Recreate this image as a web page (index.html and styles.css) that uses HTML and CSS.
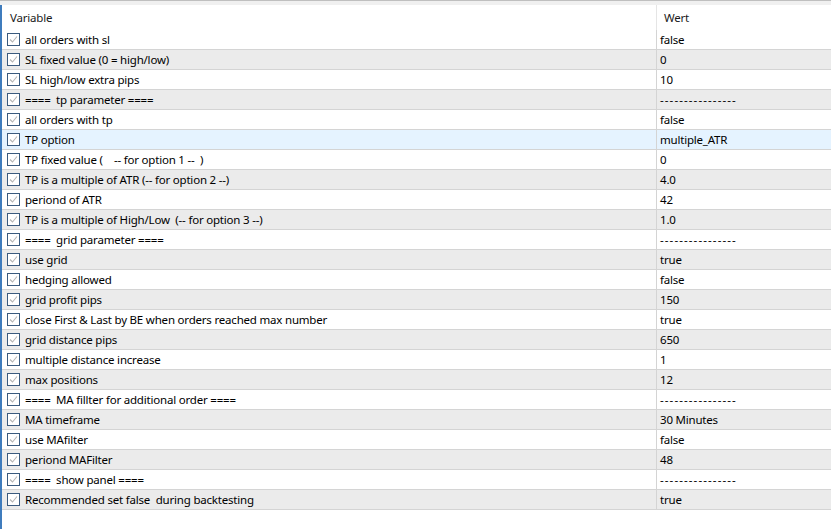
FILE: index.html
```html
<!DOCTYPE html>
<html>
<head>
<meta charset="utf-8">
<link rel="stylesheet" href="styles.css">
</head>
<body>
<div class="topbar"></div>
<div class="list">
  <div class="header">
    <div class="hcell name">Variable</div>
    <div class="hcell value">Wert</div>
  </div>
  <div id="rows"></div>
</div>
<script src="app.js"></script>
</body>
</html>
```
FILE: styles.css
```css
html, body {
  margin: 0;
  padding: 0;
  background: #ffffff;
}
body {
  font-family: "Noto Sans", "Open Sans", sans-serif;
  font-size: 11.5px;
  letter-spacing: -0.2px;
  color: #000000;
  width: 831px;
  height: 529px;
  overflow: hidden;
}
.topbar {
  height: 4px;
  background: #f0f0f0;
  border-top: 1px solid #bfbfbf;
}
.list {
  border-left: 2px solid #3f7cbd;
  height: 524px;
}
.header {
  display: flex;
  height: 25px;
  align-items: center;
}
.hcell {
  height: 25px;
  display: flex;
  align-items: center;
  color: #1a1a1a;
}
.hcell.name {
  width: 646px;
  padding-left: 8px;
  border-right: 1px solid #e5e5e5;
}
.hcell.value {
  padding-left: 7px;
}
.row {
  display: flex;
  height: 19px;
  border-bottom: 1px solid #d4d4d4;
  background: #ffffff;
}
.row.alt {
  background: #ebebeb;
}
.row.sel {
  background: #e5f3ff;
}
.cell {
  display: flex;
  align-items: center;
  white-space: pre;
}
.cell.name {
  width: 655px;
  border-right: 1px solid #d4d4d4;
  gap: 5px;
  padding-left: 5px;
  box-sizing: border-box;
}
.cell.value {
  padding-left: 3px;
}
.cell.value.dash {
  letter-spacing: 1.1px;
}
.check {
  width: 13px;
  height: 13px;
  flex: none;
}
```
FILE: app.js
```js
const data = [
  ["all orders with sl", "false"],
  ["SL fixed value (0 = high/low)", "0"],
  ["SL high/low extra pips", "10"],
  ["====  tp parameter ====", "----------------"],
  ["all orders with tp", "false"],
  ["TP option", "multiple_ATR"],
  ["TP fixed value (    -- for option 1 --  )", "0"],
  ["TP is a multiple of ATR (-- for option 2 --)", "4.0"],
  ["periond of ATR", "42"],
  ["TP is a multiple of High/Low  (-- for option 3 --)", "1.0"],
  ["====  grid parameter ====", "----------------"],
  ["use grid", "true"],
  ["hedging allowed", "false"],
  ["grid profit pips", "150"],
  ["close First & Last by BE when orders reached max number", "true"],
  ["grid distance pips", "650"],
  ["multiple distance increase", "1"],
  ["max positions", "12"],
  ["====  MA fillter for additional order ====", "----------------"],
  ["MA timeframe", "30 Minutes"],
  ["use MAfilter", "false"],
  ["periond MAFilter", "48"],
  ["====  show panel ====", "----------------"],
  ["Recommended set false  during backtesting", "true"]
];
const check = '<svg class="check" viewBox="0 0 13 13"><rect x="0.5" y="0.5" width="12" height="12" fill="#ffffff" stroke="#3a5a7e"/><path d="M3 6.5 L5.5 9 L10 3.5" fill="none" stroke="#b5b5b5" stroke-width="1.1"/></svg>';
const rows = document.getElementById("rows");
data.forEach((d, i) => {
  const r = document.createElement("div");
  r.className = "row" + (i === 5 ? " sel" : (i % 2 === 1 ? " alt" : ""));
  const n = document.createElement("div");
  n.className = "cell name";
  n.innerHTML = check;
  const t = document.createElement("span");
  t.textContent = d[0];
  n.appendChild(t);
  const v = document.createElement("div");
  v.className = "cell value" + (d[1].startsWith("--") ? " dash" : "");
  v.textContent = d[1];
  r.appendChild(n);
  r.appendChild(v);
  rows.appendChild(r);
});
```
